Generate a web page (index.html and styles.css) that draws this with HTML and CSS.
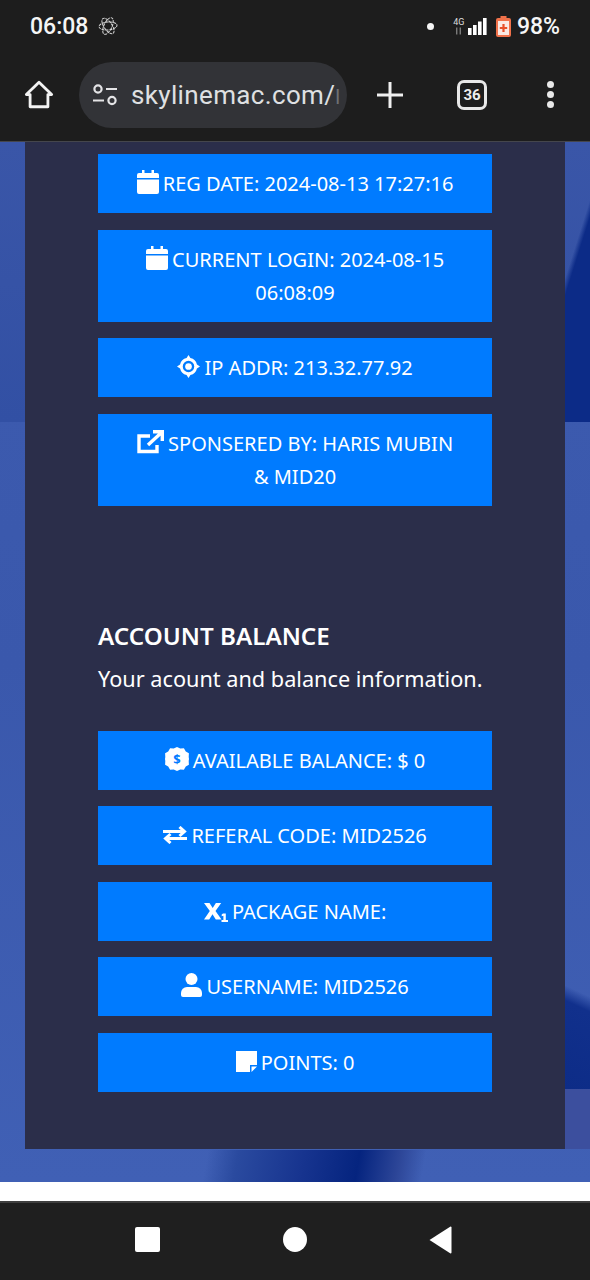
FILE: index.html
```html
<!DOCTYPE html>
<html lang="en">
<head>
<meta charset="utf-8">
<title>Account</title>
<link rel="stylesheet" href="styles.css">
</head>
<body>
<div class="phone">
  <header class="chrome">
    <div class="status">
      <div class="status-left">
        <span class="time">06:08</span>
        <svg class="atom" viewBox="0 0 20 20" fill="none" stroke="#d8d8d8" stroke-width="1" stroke-dasharray="3 .8"><ellipse cx="10" cy="10" rx="4" ry="9" transform="rotate(25 10 10)"/><ellipse cx="10" cy="10" rx="4" ry="9" transform="rotate(-35 10 10)"/><ellipse cx="10" cy="10" rx="4" ry="9" transform="rotate(85 10 10)"/></svg>
      </div>
      <div class="status-right">
        <span class="dot"></span>
        <span class="net"><span class="net-label">4G</span><svg class="net-arrows" viewBox="0 0 8 8"><path d="M2 0v8M6 0v8" stroke="#8a8a8a" stroke-width="1.4"/></svg></span>
        <svg class="signal" viewBox="0 0 19 17" fill="#fff"><rect x="0" y="10" width="3.6" height="7"/><rect x="5" y="7" width="3.6" height="10"/><rect x="10" y="3.5" width="3.6" height="13.5"/><rect x="15" y="0" width="3.6" height="17"/></svg>
        <svg class="battery" viewBox="0 0 15 21"><path d="M4.5 0h6v2H13a2 2 0 0 1 2 2v15a2 2 0 0 1-2 2H2a2 2 0 0 1-2-2V4a2 2 0 0 1 2-2h2.500z" fill="#f0714a"/><rect x="2" y="5" width="11" height="14" fill="#fbe9e3"/><path d="M7.500 8v8M3.800 12h7.400" stroke="#e8502a" stroke-width="2.200"/></svg>
        <span class="pct">98%</span>
      </div>
    </div>
    <div class="toolbar">
      <svg class="home" viewBox="0 0 32 32" fill="none" stroke="#f2f2f2" stroke-width="3" stroke-linejoin="round"><path d="M2.500 15.500 16 2.500l13.500 13H25.500V28.500H6.500V15.500z"/></svg>
      <div class="omnibox">
        <svg class="tune" viewBox="0 0 26 22" fill="none" stroke="#e4e4e6" stroke-width="2.200"><circle cx="6" cy="5" r="3.600"/><path d="M14 5h11M1 16.500h11"/><circle cx="20" cy="16.500" r="3.600"/></svg>
        <span class="url">skylinemac.com/<span class="url-fade">l</span></span>
      </div>
      <svg class="plus" viewBox="0 0 28 28" stroke="#f0f0f0" stroke-width="3"><path d="M14 1v26M1 14h26"/></svg>
      <span class="tabs">36</span>
      <span class="menu"><i></i><i></i><i></i></span>
    </div>
  </header>

  <main class="page">
    <section class="panel">
      <ul class="list">
        <li class="item"><svg class="ic" viewBox="0 0 22 24" fill="#fff"><path d="M5 0h2.500v3h7V0H17v3h3a2 2 0 0 1 2 2v3H0V5a2 2 0 0 1 2-2h3zM0 9.500h22V22a2 2 0 0 1-2 2H2a2 2 0 0 1-2-2z"/></svg> REG DATE: 2024-08-13 17:27:16</li>
        <li class="item"><svg class="ic" viewBox="0 0 22 24" fill="#fff"><path d="M5 0h2.500v3h7V0H17v3h3a2 2 0 0 1 2 2v3H0V5a2 2 0 0 1 2-2h3zM0 9.500h22V22a2 2 0 0 1-2 2H2a2 2 0 0 1-2-2z"/></svg> CURRENT LOGIN: 2024-08-15 06:08:09</li>
        <li class="item"><svg class="ic ic-wide" viewBox="0 0 24 24" fill="#fff"><path fill-rule="evenodd" d="M12 0l2 3.200A9 9 0 0 1 20.800 10L24 12l-3.200 2a9 9 0 0 1-6.800 6.800L12 24l-2-3.200A9 9 0 0 1 3.200 14L0 12l3.200-2A9 9 0 0 1 10 3.200zM12 6a6 6 0 1 0 0 12 6 6 0 0 0 0-12z"/><circle cx="12" cy="12" r="3.500"/></svg> IP ADDR: 213.32.77.92</li>
        <li class="item"><svg class="ic" viewBox="0 0 27 24" fill="none" stroke="#fff" stroke-width="3.400"><path d="M20 15v6.500H2V6h11"/><path d="M11 15 24.500 2.500M16 1.700h9.300V11"/></svg> SPONSERED BY: HARIS MUBIN &amp; MID20</li>
      </ul>
      <h2 class="title">ACCOUNT BALANCE</h2>
      <p class="lead">Your acount and balance information.</p>
      <ul class="list">
        <li class="item"><svg class="ic" viewBox="0 0 24 24"><path fill="#fff" d="M12 0l3.300 1.500 3.600-.2 1.900 3.100 3.100 1.900-.2 3.600L24 12l-.3 2.100.2 3.600-3.100 1.900-1.900 3.100-3.600-.2L12 24l-3.300-1.500-3.600.2-1.900-3.100L.1 17.700l.2-3.600L0 12l.3-2.100-.2-3.600 3.100-1.900 1.900-3.100 3.600.2z"/><text x="12" y="16.500" class="badge-text">$</text></svg> AVAILABLE BALANCE: $ 0</li>
        <li class="item"><svg class="ic ic-swap" viewBox="0 0 24 18" fill="none" stroke="#fff" stroke-width="3"><path d="M0 5.500h21M16.500 1l5 4.500-5 4.500M24 12.500H3M7.500 8l-5 4.500 5 4.500"/></svg> REFERAL CODE: MID2526</li>
        <li class="item"><svg class="ic ic-x" viewBox="0 0 24 19" fill="#fff"><path d="M0 0h5.500l3.200 5 3.200-5h5.300l-5.700 8 6 8.500H11.800L8.500 11.300 5.200 16.500H0l5.800-8.500z"/><path d="M19 10.500h2.800V17H24v2h-6.500v-2h1.900v-4.300l-1.700.6v-1.900z"/></svg> PACKAGE NAME:</li>
        <li class="item"><svg class="ic" viewBox="0 0 21 24" fill="#fff"><circle cx="10.500" cy="6" r="6"/><path d="M6 14h9a6 6 0 0 1 6 6v2a2 2 0 0 1-2 2H2a2 2 0 0 1-2-2v-2a6 6 0 0 1 6-6z"/></svg> USERNAME: MID2526</li>
        <li class="item"><svg class="ic ic-note" viewBox="0 0 21 21" fill="#fff"><path d="M0 0h21v14h-7v7H0zM15.500 15.500H21L15.500 21z"/></svg> POINTS: 0</li>
      </ul>
    </section>
  </main>
  <div class="white"></div>
  <footer class="nav">
    <span class="nav-square"></span>
    <span class="nav-circle"></span>
    <svg class="nav-back" viewBox="0 0 22 28" fill="#fff"><path d="M21 .5a1 1 0 0 1 1 1v25a1 1 0 0 1-1 1L0 14z"/></svg>
  </footer>
</div>
</body>
</html>
```
FILE: styles.css
```css
* { box-sizing: border-box; }
html, body { margin: 0; padding: 0; }
body { width: 590px; height: 1280px; overflow: hidden; background: #1f1f1f; font-family: "Noto Sans", "Liberation Sans", sans-serif; }
.phone { width: 590px; height: 1280px; display: flex; flex-direction: column; }

.chrome { height: 142px; background: #1d1d1d; border-bottom: 1px solid #45464c; flex: none; }
.status { height: 52px; padding: 0 30px; display: flex; justify-content: space-between; align-items: center; }
.status-left, .status-right { display: flex; align-items: center; }
.time { font-family: Roboto, sans-serif; font-weight: 500; font-size: 23px; color: #f5f5f5; }
.atom { width: 20px; height: 20px; margin-left: 10px; }
.dot { width: 7px; height: 7px; border-radius: 50%; background: #f5f5f5; margin-right: 17.500px; }
.net { width: 14px; display: flex; flex-direction: column; align-items: center; margin-right: 2px; }
.net-label { font-family: Roboto, sans-serif; font-size: 9px; line-height: 9px; color: #ddd; }
.net-arrows { width: 7px; height: 8px; }
.signal { width: 19px; height: 17px; margin-right: 9px; }
.battery { width: 15px; height: 21px; margin-right: 6px; }
.pct { font-family: Roboto, sans-serif; font-weight: 500; font-size: 23px; color: #f5f5f5; }

.toolbar { height: 89px; padding-bottom: 4px; display: flex; align-items: center; }
.home { width: 30px; height: 30px; margin-left: 24px; flex: none; }
.omnibox { width: 268px; height: 66px; margin-left: 25px; border-radius: 33px; background: #323337; display: flex; align-items: center; padding-left: 13px; flex: none; }
.tune { width: 26px; height: 22px; flex: none; }
.url { font-family: Roboto, sans-serif; font-size: 26px; letter-spacing: .35px; color: #dfe0e2; margin-left: 13px; white-space: nowrap; }
.url-fade { color: #6f7074; font-size: 20px; }
.plus { width: 28px; height: 28px; margin-left: 29px; flex: none; }
.tabs { width: 30px; height: 30px; margin-left: 53px; border: 3px solid #e8e8e8; border-radius: 7px; color: #eee; font-family: Roboto, sans-serif; font-weight: 700; font-size: 15px; display: flex; align-items: center; justify-content: center; flex: none; }
.menu { margin-left: 60px; display: flex; flex-direction: column; gap: 3px; flex: none; }
.menu i { width: 7px; height: 7px; border-radius: 50%; background: #e8e8e8; display: block; }

.page { height: 1040px; flex: none; overflow: hidden; padding: 0 25px 33px; background:
  linear-gradient(100deg, transparent 0, transparent 205px, #2a4a9f 235px, #17348f 300px, #05247f 355px, #2d4698 395px, transparent 420px) 0 100% / 100% 32px no-repeat,
  linear-gradient(107.500deg, transparent 38%, #0c2b87 43%) 100% 0 / 25px 280px no-repeat,
  linear-gradient(205deg, transparent 18%, #11308c 30%, #0d2c87 100%) 100% 832px / 25px 115px no-repeat,
  linear-gradient(180deg, #3c4f9e 0, #3c4f9e 100%) 100% 947px / 25px 60px no-repeat,
  linear-gradient(180deg, #3a56a8 0, #3250a4 100%) 0 0 / 100% 280px no-repeat,
  linear-gradient(180deg, #3e5cb0 0, #3a58ac 50%, #4060b5 100%); }
.panel { height: 1007px; background: #2b2e4a; padding: 12px 73px 0; }
.list { list-style: none; margin: 0; padding: 0; display: flex; flex-direction: column; gap: 16.500px; }
.item { background: #007bff; color: #fff; padding: 13px 30px; font-size: 20px; line-height: 33px; text-align: center; }
.ic { height: 24px; width: auto; vertical-align: -3px; margin-right: -1px; }
.ic-wide { height: 23px; }
.ic-swap { height: 18px; vertical-align: -1px; }
.ic-x { height: 19px; vertical-align: -3px; }
.ic-note { height: 21px; vertical-align: -2px; }
.badge-text { font-size: 13px; font-weight: 700; fill: #007bff; text-anchor: middle; font-family: "Noto Sans", sans-serif; }
.title { margin: 113px 0 0; font-size: 24.200px; line-height: 34px; font-weight: 600; color: #fff; }
.lead { margin: 9px 0 36px; font-size: 21.700px; line-height: 33px; color: #fff; white-space: nowrap; }

.white { height: 19px; background: #fff; flex: none; }
.nav { flex: 1; background: #1f1f1f; border-top: 2px solid #3f3f3f; display: flex; align-items: center; padding: 0 0 4px 135px; }
.nav-square { width: 25px; height: 25px; background: #fff; border-radius: 2px; margin-right: 123px; }
.nav-circle { width: 24px; height: 25px; background: #fff; border-radius: 50%; margin-right: 122px; }
.nav-back { width: 23px; height: 28px; flex: none; }
```
